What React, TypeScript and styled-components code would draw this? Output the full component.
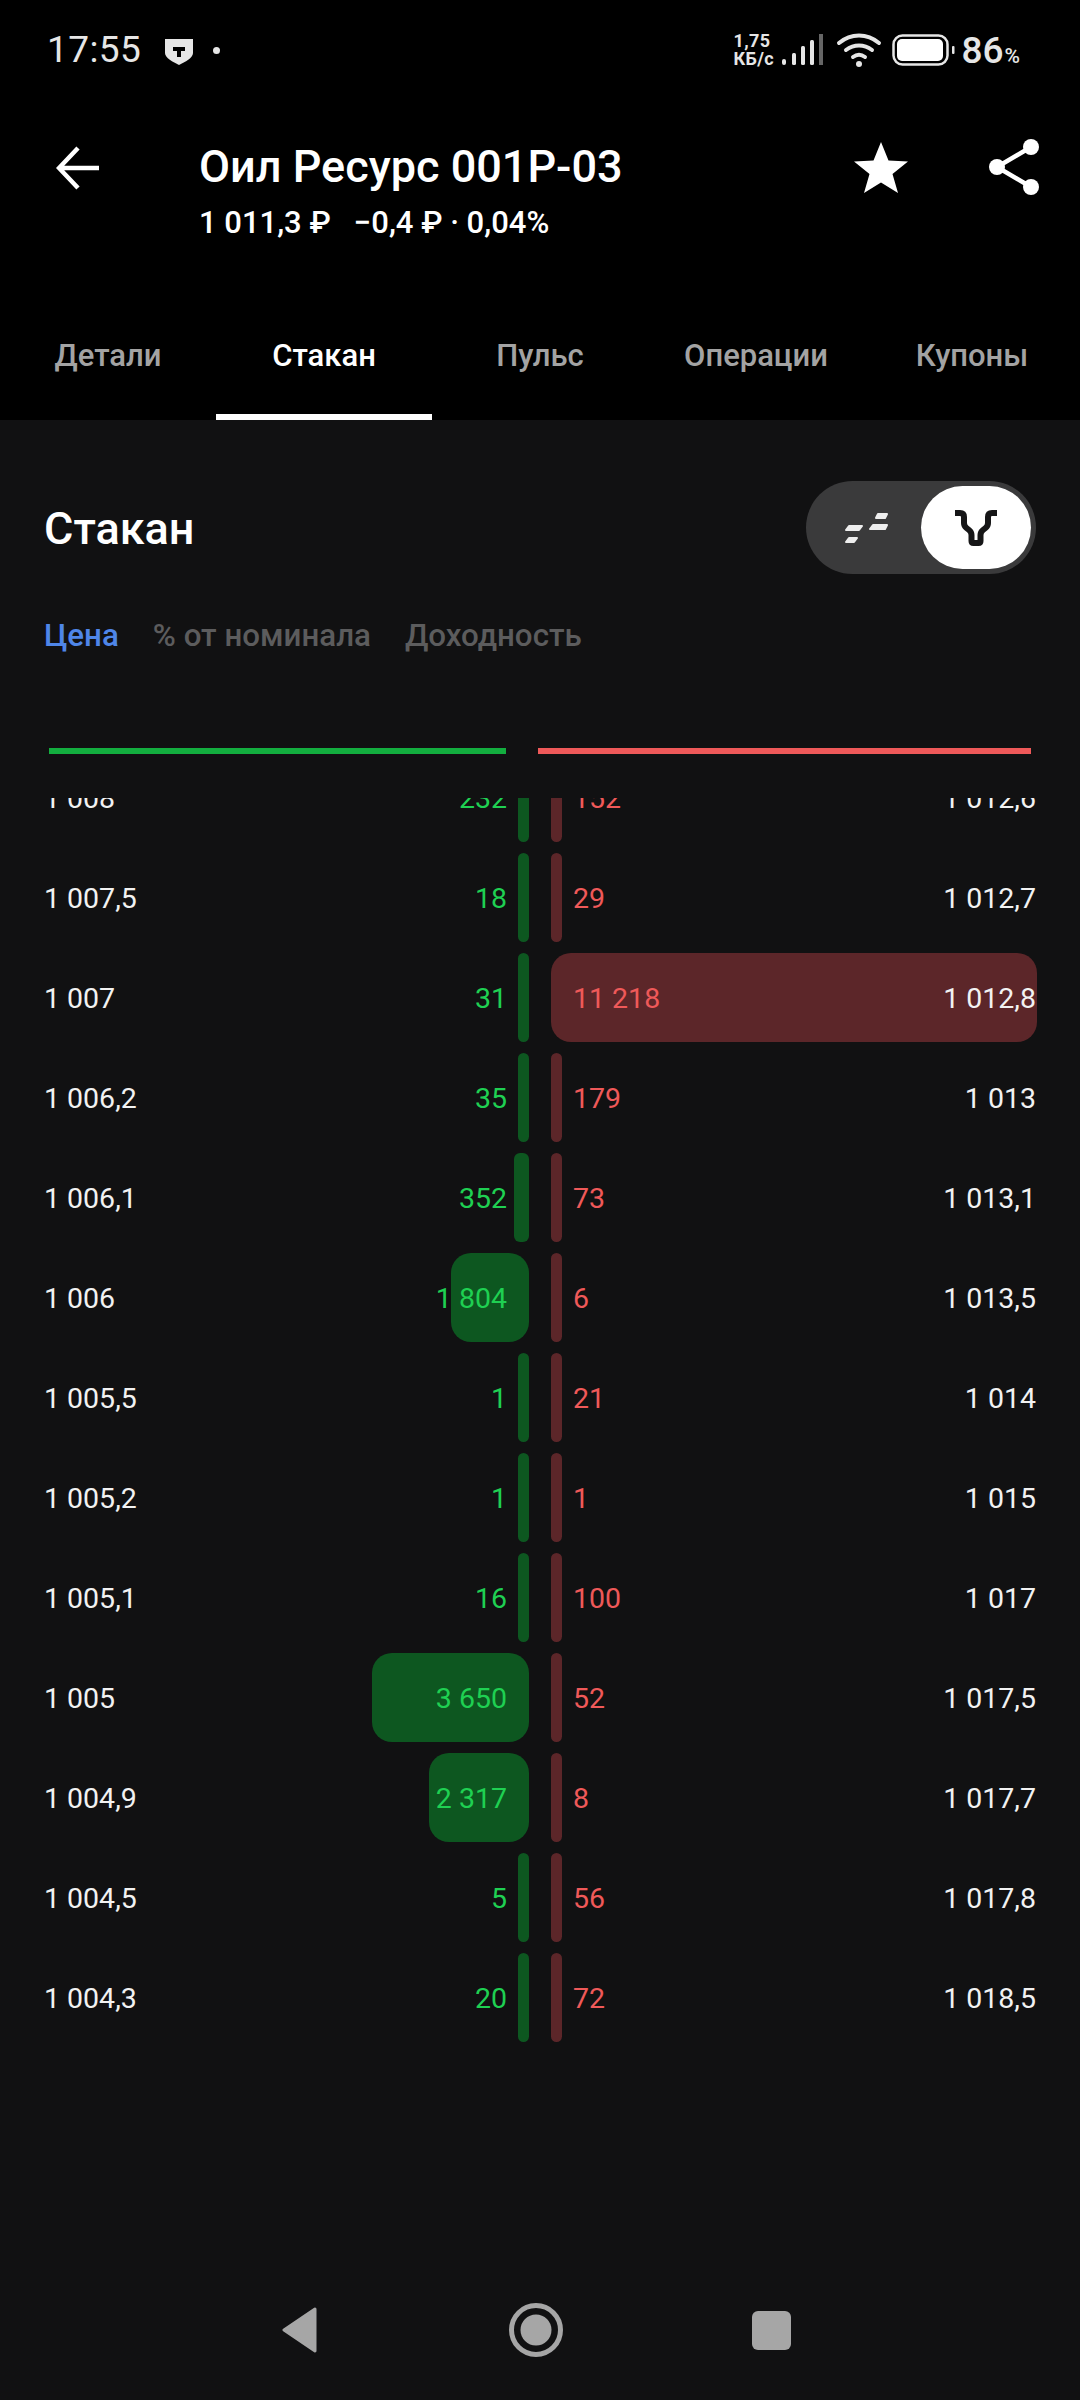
import styled, { createGlobalStyle } from 'styled-components';

interface Level {
  bidPrice: string;
  bidQty: string;
  bidWidth: number;
  askQty: string;
  askPrice: string;
  askWidth: number;
}

const levels: Level[] = [
  { bidPrice: '1 008', bidQty: '232', bidWidth: 11, askQty: '152', askPrice: '1 012,6', askWidth: 11 },
  { bidPrice: '1 007,5', bidQty: '18', bidWidth: 11, askQty: '29', askPrice: '1 012,7', askWidth: 11 },
  { bidPrice: '1 007', bidQty: '31', bidWidth: 11, askQty: '11 218', askPrice: '1 012,8', askWidth: 486 },
  { bidPrice: '1 006,2', bidQty: '35', bidWidth: 11, askQty: '179', askPrice: '1 013', askWidth: 11 },
  { bidPrice: '1 006,1', bidQty: '352', bidWidth: 15, askQty: '73', askPrice: '1 013,1', askWidth: 11 },
  { bidPrice: '1 006', bidQty: '1 804', bidWidth: 78, askQty: '6', askPrice: '1 013,5', askWidth: 11 },
  { bidPrice: '1 005,5', bidQty: '1', bidWidth: 11, askQty: '21', askPrice: '1 014', askWidth: 11 },
  { bidPrice: '1 005,2', bidQty: '1', bidWidth: 11, askQty: '1', askPrice: '1 015', askWidth: 11 },
  { bidPrice: '1 005,1', bidQty: '16', bidWidth: 11, askQty: '100', askPrice: '1 017', askWidth: 11 },
  { bidPrice: '1 005', bidQty: '3 650', bidWidth: 157, askQty: '52', askPrice: '1 017,5', askWidth: 11 },
  { bidPrice: '1 004,9', bidQty: '2 317', bidWidth: 100, askQty: '8', askPrice: '1 017,7', askWidth: 11 },
  { bidPrice: '1 004,5', bidQty: '5', bidWidth: 11, askQty: '56', askPrice: '1 017,8', askWidth: 11 },
  { bidPrice: '1 004,3', bidQty: '20', bidWidth: 11, askQty: '72', askPrice: '1 018,5', askWidth: 11 },
];

const tabs = ['Детали', 'Стакан', 'Пульс', 'Операции', 'Купоны'];

const GlobalStyle = createGlobalStyle`
  html, body {
    margin: 0;
    padding: 0;
    background: #111112;
  }
  * {
    box-sizing: border-box;
  }
`;

const Screen = styled.div`
  width: 1080px;
  height: 2400px;
  overflow: hidden;
  display: flex;
  flex-direction: column;
  background: #111112;
  color: #fff;
  font-family: Roboto, 'Liberation Sans', sans-serif;
`;

const Header = styled.header`
  background: #000;
  height: 420px;
  flex-shrink: 0;
`;

const StatusBar = styled.div`
  height: 100px;
  display: flex;
  align-items: center;
  padding: 0 60px 0 47px;
  color: #e6e6e6;
`;

const Clock = styled.span`
  font-size: 37px;
  line-height: 100px;
  letter-spacing: 0.4px;
  margin-right: 24px;
`;

const ShieldIcon = styled.svg`
  display: block;
  margin-top: 2px;
`;

const Dot = styled.span`
  width: 7px;
  height: 7px;
  border-radius: 50%;
  background: #e6e6e6;
  margin-left: 20px;
`;

const StatusRight = styled.div`
  margin-left: auto;
  display: flex;
  align-items: center;
`;

const NetSpeed = styled.div`
  display: flex;
  flex-direction: column;
  font-size: 18px;
  font-weight: 700;
  line-height: 18px;
  letter-spacing: 0.4px;
  width: 49px;
  color: #e6e6e6;
`;

const Battery = styled.span`
  font-size: 37px;
  font-weight: 500;
  margin-left: 5px;
  small {
    font-size: 21px;
    font-weight: 500;
    margin-left: 1px;
  }
`;

const StatusIcon = styled.svg<{ $left: number }>`
  display: block;
  margin-left: ${(p) => p.$left}px;
`;

const TopBar = styled.div`
  height: 190px;
  display: flex;
  align-items: flex-start;
  padding: 39px 41px 0 56px;
`;

const BackIcon = styled.svg`
  display: block;
  margin-top: 7px;
`;

const Heading = styled.div`
  margin-left: 99px;
`;

const Title = styled.div`
  font-size: 45px;
  font-weight: 500;
  line-height: 56px;
`;

const Subtitle = styled.div`
  font-size: 31px;
  font-weight: 500;
  line-height: 40px;
  margin-top: 8px;
  white-space: pre;
`;

const Star = styled.svg`
  display: block;
  margin-left: auto;
  margin-top: 3px;
`;

const Share = styled.svg`
  display: block;
  margin-left: 81px;
`;

const Tabs = styled.nav`
  display: grid;
  grid-template-columns: repeat(5, 216px);
`;

const Tab = styled.div<{ $active?: boolean }>`
  height: 130px;
  padding-top: 6px;
  display: flex;
  align-items: center;
  justify-content: center;
  font-size: 31px;
  font-weight: 500;
  color: ${(p) => (p.$active ? '#fff' : '#a3a3a3')};
  border-bottom: 6px solid ${(p) => (p.$active ? '#fff' : 'transparent')};
`;

const SectionHead = styled.div`
  display: flex;
  align-items: center;
  justify-content: space-between;
  padding: 61px 44px 0;
`;

const SectionTitle = styled.h2`
  margin: 3px 0 0;
  font-size: 45px;
  font-weight: 500;
  line-height: 56px;
`;

const Toggle = styled.div`
  width: 230px;
  height: 93px;
  border-radius: 47px;
  background: #3a3a3b;
  padding: 5px;
  display: flex;
  align-items: center;
  justify-content: space-between;
`;

const ToggleIdle = styled.div`
  flex: 1;
  display: flex;
  justify-content: center;
`;

const ToggleKnob = styled.div`
  width: 110px;
  height: 83px;
  border-radius: 42px;
  background: #fff;
  display: flex;
  align-items: center;
  justify-content: center;
`;

const Filters = styled.div`
  display: flex;
  gap: 34px;
  padding: 0 44px;
  margin-top: 42px;
`;

const Filter = styled.span<{ $active?: boolean }>`
  font-size: 31.3px;
  font-weight: 500;
  line-height: 40px;
  color: ${(p) => (p.$active ? '#4f86e8' : '#5c5c5d')};
`;

const Totals = styled.div`
  display: grid;
  grid-template-columns: 457px 493px;
  column-gap: 32px;
  padding-left: 49px;
  margin-top: 92px;
`;

const TotalLine = styled.div<{ $color: string }>`
  height: 6px;
  background: ${(p) => p.$color};
`;

const BookViewport = styled.div`
  margin-top: 44px;
  height: 1246px;
  overflow: hidden;
`;

const Book = styled.div`
  display: flex;
  flex-direction: column;
  gap: 11px;
  margin-top: -45px;
`;

const Row = styled.div`
  display: grid;
  grid-template-columns: 529px 1fr;
  column-gap: 22px;
  height: 89px;
  width: 1080px;
`;

const Side = styled.div`
  position: relative;
  display: flex;
  align-items: center;
  justify-content: space-between;
  font-size: 28.5px;
  line-height: 40px;
`;

const BidSide = styled(Side)`
  padding: 3px 22px 0 44px;
`;

const AskSide = styled(Side)`
  padding: 3px 44px 0 22px;
`;

const Price = styled.span`
  position: relative;
  color: #f2f2f2;
`;

const Qty = styled.span<{ $color: string }>`
  position: relative;
  color: ${(p) => p.$color};
`;

const DepthBar = styled.div<{ $side: 'bid' | 'ask' }>`
  position: absolute;
  top: 0;
  bottom: 0;
  ${(p) => (p.$side === 'bid' ? 'right: 0;' : 'left: 0;')}
  min-width: 11px;
  max-width: 100%;
  border-radius: 20px;
  background: ${(p) => (p.$side === 'bid' ? '#0d5720' : '#5c2629')};
  &[data-thin='true'] {
    border-radius: 6px;
  }
`;

const NavBar = styled.div`
  margin-top: auto;
  height: 136px;
  display: grid;
  grid-template-columns: 281px 37px 191px 54px 189px 39px;
  align-items: center;
`;

const NavCell = styled.div<{ $col: number }>`
  grid-column: ${(p) => p.$col};
  display: flex;
  justify-content: center;
`;

const NavIcon = styled.svg`
  display: block;
  margin-top: -4px;
`;

export default function App() {
  return (
    <Screen>
      <GlobalStyle />
      <Header>
        <StatusBar>
          <Clock>17:55</Clock>
          <ShieldIcon width="28" height="27" viewBox="0 0 28 27">
            <path d="M0 1h28v14c0 5-8 9-14 12C8 24 0 20 0 15z" fill="#e6e6e6" />
            <path d="M8 9h12v4h-4v6h-4v-6H8z" fill="#000" />
          </ShieldIcon>
          <Dot />
          <StatusRight>
            <NetSpeed>
              <span>1,75</span>
              <span>КБ/с</span>
            </NetSpeed>
            <StatusIcon $left={0} width="42" height="32" viewBox="0 0 42 32">
              <rect x="0" y="25" width="4" height="6" rx="2" fill="#e6e6e6" />
              <rect x="10" y="19" width="4" height="12" rx="1.5" fill="#e6e6e6" />
              <rect x="19" y="12" width="4" height="19" rx="1.5" fill="#e6e6e6" />
              <rect x="28" y="6" width="4" height="25" rx="1.5" fill="#e6e6e6" />
              <rect x="37" y="0" width="4" height="31" fill="#666" />
            </StatusIcon>
            <StatusIcon $left={12} width="46" height="34" viewBox="0 0 46 34">
              <g fill="none" stroke="#e6e6e6" strokeWidth="4" strokeLinecap="round">
                <path d="M3 10C15 0 31 0 43 10" />
                <path d="M10 17c8-6 18-6 26 0" />
                <path d="M17 24c4-3 8-3 12 0" />
              </g>
              <circle cx="23" cy="31" r="3" fill="#e6e6e6" />
            </StatusIcon>
            <StatusIcon $left={10} width="64" height="32" viewBox="0 0 64 32">
              <rect x="1.5" y="1.5" width="54" height="29" rx="9" fill="none" stroke="#e6e6e6" strokeWidth="2.5" />
              <rect x="5" y="5" width="46" height="22" rx="5" fill="#fff" />
              <rect x="60" y="12" width="2.5" height="8" rx="1" fill="#e6e6e6" />
            </StatusIcon>
            <Battery>
              86<small>%</small>
            </Battery>
          </StatusRight>
        </StatusBar>
        <TopBar>
          <BackIcon width="44" height="44" viewBox="0 0 44 44">
            <path d="M43 22H4M22 2 3 22l19 20" fill="none" stroke="#fff" strokeWidth="4.5" />
          </BackIcon>
          <Heading>
            <Title>Оил Ресурс 001Р-03</Title>
            <Subtitle>{'1 011,3 ₽   −0,4 ₽ · 0,04%'}</Subtitle>
          </Heading>
          <Star width="54" height="51" viewBox="0 0 54 51">
            <path d="M27 0l7.500 18.500L54 19.500 38.500 32 44 51 27 40.500 10 51l5.500-19L0 19.500l19.500-1z" fill="#fff" />
          </Star>
          <Share width="50" height="56" viewBox="0 0 50 56">
            <path d="M42 8 8 28l34 20" fill="none" stroke="#fff" strokeWidth="4.500" />
            <circle cx="42" cy="8" r="8" fill="#fff" />
            <circle cx="8" cy="28" r="8" fill="#fff" />
            <circle cx="42" cy="48" r="8" fill="#fff" />
          </Share>
        </TopBar>
        <Tabs>
          {tabs.map((tab) => (
            <Tab key={tab} $active={tab === 'Стакан'}>
              {tab}
            </Tab>
          ))}
        </Tabs>
      </Header>

      <SectionHead>
        <SectionTitle>Стакан</SectionTitle>
        <Toggle>
          <ToggleIdle>
            <svg width="43" height="30" viewBox="0 0 43 30">
              <g fill="#eee" stroke="#eee" strokeWidth="2" strokeLinejoin="round">
                <path d="M4 13h13l-3 4H1z" />
                <path d="M4 25h8l-3 4H1z" />
                <path d="M28 12h14l-2 4H25z" />
                <path d="M33 1h9l-2 4h-9z" />
              </g>
            </svg>
          </ToggleIdle>
          <ToggleKnob>
            <svg width="42" height="36" viewBox="0 0 42 36">
              <path
                d="M0 3H5Q9 3 9 7V13Q9 16 11.500 18L14 20Q16.500 22 16.500 25V31Q16.500 33 18.500 33H23.500Q25.500 33 25.500 31V25Q25.500 22 28 20L30.500 18Q33 16 33 13V7Q33 3 37 3H42"
                fill="none"
                stroke="#161617"
                strokeWidth="6"
              />
            </svg>
          </ToggleKnob>
        </Toggle>
      </SectionHead>

      <Filters>
        <Filter $active>Цена</Filter>
        <Filter>% от номинала</Filter>
        <Filter>Доходность</Filter>
      </Filters>

      <Totals>
        <TotalLine $color="#13ae3f" />
        <TotalLine $color="#ef5959" />
      </Totals>

      <BookViewport>
        <Book>
          {levels.map((level) => (
            <Row key={level.bidPrice}>
              <BidSide>
                <DepthBar $side="bid" data-thin={level.bidWidth < 20} style={{ width: level.bidWidth }} />
                <Price>{level.bidPrice}</Price>
                <Qty $color="#1fd052">{level.bidQty}</Qty>
              </BidSide>
              <AskSide>
                <DepthBar $side="ask" data-thin={level.askWidth < 20} style={{ width: level.askWidth }} />
                <Qty $color="#ef5959">{level.askQty}</Qty>
                <Price>{level.askPrice}</Price>
              </AskSide>
            </Row>
          ))}
        </Book>
      </BookViewport>

      <NavBar>
        <NavCell $col={2}>
          <NavIcon width="37" height="46" viewBox="0 0 37 46">
            <path d="M34 2 3 23l31 21z" fill="#a6a6a6" stroke="#a6a6a6" strokeWidth="3" strokeLinejoin="round" />
          </NavIcon>
        </NavCell>
        <NavCell $col={4}>
          <NavIcon width="54" height="54" viewBox="0 0 54 54">
            <circle cx="27" cy="27" r="24.500" fill="none" stroke="#a6a6a6" strokeWidth="5" />
            <circle cx="27" cy="27" r="15.500" fill="#a6a6a6" />
          </NavIcon>
        </NavCell>
        <NavCell $col={6}>
          <NavIcon width="39" height="39" viewBox="0 0 39 39">
            <rect width="39" height="39" rx="6" fill="#a6a6a6" />
          </NavIcon>
        </NavCell>
      </NavBar>
    </Screen>
  );
}
